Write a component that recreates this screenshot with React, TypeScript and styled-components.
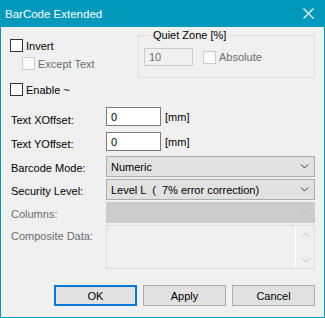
import React from 'react';
import styled, { createGlobalStyle } from 'styled-components';

const GlobalStyle = createGlobalStyle`
  html, body {
    margin: 0;
    padding: 0;
    background: #f0f0f0;
  }
  * {
    box-sizing: border-box;
  }
`;

const Window = styled.div`
  width: 325px;
  height: 318px;
  display: flex;
  flex-direction: column;
  background: #f0f0f0;
  border: 1px solid #0099bc;
  border-top: none;
  font-family: 'Liberation Sans', Arial, sans-serif;
  font-size: 11px;
  color: #000;
`;

const TitleBar = styled.div`
  height: 27px;
  margin: 0 -1px;
  padding: 0 11px 0 5px;
  display: flex;
  align-items: center;
  justify-content: space-between;
  background: #0099bc;
  color: #fff;
  font-size: 11.5px;
  flex-shrink: 0;
`;

const Body = styled.div`
  flex: 1;
  display: flex;
  flex-direction: column;
  padding: 0 9px 0 9px;
`;

const TopRow = styled.div`
  display: flex;
  align-items: flex-start;
  justify-content: space-between;
`;

const LeftCol = styled.div`
  display: flex;
  flex-direction: column;
  gap: 5px;
  padding-top: 12px;
`;

const CheckRow = styled.label<{ $indent?: number; $disabled?: boolean }>`
  display: flex;
  align-items: center;
  gap: 3px;
  height: 13px;
  margin-left: ${p => p.$indent || 0}px;
  color: ${p => (p.$disabled ? '#6d6d6d' : '#000')};
  white-space: nowrap;
`;

const Box = styled.span<{ $disabled?: boolean }>`
  width: 13px;
  height: 13px;
  flex-shrink: 0;
  background: ${p => (p.$disabled ? '#fbfbfb' : '#fff')};
  border: 1px solid ${p => (p.$disabled ? '#cccccc' : '#333333')};
`;

const Group = styled.fieldset`
  margin: 1px 0 0 0;
  width: 177px;
  height: 50px;
  padding: 0 0 0 5px;
  border: 1px solid #dcdcdc;
  display: flex;
  align-items: flex-start;
  gap: 10px;
`;

const Legend = styled.legend`
  margin-left: 7px;
  padding: 0 2px;
  line-height: 14px;
`;

const TextInput = styled.div<{ $disabled?: boolean; $w: number; $h: number }>`
  width: ${p => p.$w}px;
  height: ${p => p.$h}px;
  display: flex;
  align-items: center;
  padding-left: 4px;
  background: ${p => (p.$disabled ? '#f0f0f0' : '#fff')};
  border: 1px solid ${p => (p.$disabled ? '#cccccc' : '#7a7a7a')};
  color: ${p => (p.$disabled ? '#6d6d6d' : '#000')};
`;

const GroupInner = styled.div`
  display: flex;
  align-items: center;
  gap: 10px;
  margin-top: 6px;
`;

const Form = styled.div`
  display: grid;
  grid-template-columns: 96px 1fr;
  align-items: center;
  margin-top: 11px;
`;

const Label = styled.div<{ $disabled?: boolean }>`
  padding-left: 1px;
  color: ${p => (p.$disabled ? '#6d6d6d' : '#000')};
  align-self: center;
`;

const TopLabel = styled(Label)`
  align-self: start;
  padding-top: 5px;
`;

const OffsetCell = styled.div<{ $gap: number }>`
  display: flex;
  align-items: center;
  gap: 4px;
  margin-bottom: ${p => p.$gap}px;
`;

const Combo = styled.div<{ $disabled?: boolean; $gap: number }>`
  height: 21px;
  margin-bottom: ${p => p.$gap}px;
  display: flex;
  align-items: center;
  justify-content: space-between;
  padding: 0 5px 0 4px;
  background: ${p => (p.$disabled ? '#cccccc' : '#e1e1e1')};
  border: 1px solid ${p => (p.$disabled ? '#cccccc' : '#adadad')};
  white-space: pre;
`;

const Memo = styled.div`
  height: 44px;
  display: flex;
  justify-content: flex-end;
  background: #f0f0f0;
  border: 1px solid #dcdcdc;
`;

const ScrollBar = styled.div`
  width: 19px;
  display: flex;
  flex-direction: column;
  justify-content: space-between;
  align-items: center;
  padding: 6px 0 5px;
  border-left: 1px solid #ffffff;
`;

const Buttons = styled.div`
  display: flex;
  justify-content: flex-end;
  gap: 6px;
  margin-top: 16px;
`;

const Button = styled.div<{ $default?: boolean }>`
  width: 83px;
  height: 21px;
  display: flex;
  align-items: center;
  justify-content: center;
  background: #e1e1e1;
  border: ${p => (p.$default ? '2px solid #0078d7' : '1px solid #adadad')};
`;

const Chevron = ({ color = '#333', up = false }: { color?: string; up?: boolean }) => (
  <svg width="9" height="5" viewBox="0 0 9 5">
    <polyline
      points={up ? '1,4.5 4.5,1 8,4.5' : '1,0.5 4.5,4 8,0.5'}
      fill="none"
      stroke={color}
      strokeWidth="1"
    />
  </svg>
);

const CloseIcon = () => (
  <svg width="11" height="11" viewBox="0 0 11 11">
    <path d="M0.5 0.5 L10.5 10.5 M10.5 0.5 L0.5 10.5" stroke="#fff" strokeWidth="1.1" />
  </svg>
);

const Check = ({ label, disabled, indent }: { label: string; disabled?: boolean; indent?: number }) => (
  <CheckRow $disabled={disabled} $indent={indent}>
    <Box $disabled={disabled} />
    {label}
  </CheckRow>
);

export default function App() {
  return (
    <>
      <GlobalStyle />
      <Window>
        <TitleBar>
          <span>BarCode Extended</span>
          <CloseIcon />
        </TitleBar>
        <Body>
          <TopRow>
            <LeftCol>
              <Check label="Invert" />
              <Check label="Except Text" disabled indent={12} />
            </LeftCol>
            <Group>
              <Legend>Quiet Zone [%]</Legend>
              <GroupInner>
                <TextInput $disabled $w={49} $h={18}>10</TextInput>
                <Check label="Absolute" disabled />
              </GroupInner>
            </Group>
          </TopRow>
          <LeftCol style={{ paddingTop: 5 }}>
            <Check label="Enable ~" />
          </LeftCol>
          <Form>
            <Label>Text XOffset:</Label>
            <OffsetCell $gap={6}>
              <TextInput $w={55} $h={19}>0</TextInput>
              [mm]
            </OffsetCell>
            <Label>Text YOffset:</Label>
            <OffsetCell $gap={5}>
              <TextInput $w={55} $h={19}>0</TextInput>
              [mm]
            </OffsetCell>
            <Label>Barcode Mode:</Label>
            <Combo $gap={2}>
              Numeric
              <Chevron />
            </Combo>
            <Label>Security Level:</Label>
            <Combo $gap={2}>
              {'Level L  (  7% error correction)'}
              <Chevron />
            </Combo>
            <Label $disabled>Columns:</Label>
            <Combo $disabled $gap={2}>
              <span />
              <Chevron color="#b8b8b8" />
            </Combo>
            <TopLabel $disabled>Composite Data:</TopLabel>
            <Memo>
              <ScrollBar>
                <Chevron color="#c0c0c0" up />
                <Chevron color="#c0c0c0" />
              </ScrollBar>
            </Memo>
          </Form>
          <Buttons>
            <Button $default>OK</Button>
            <Button>Apply</Button>
            <Button>Cancel</Button>
          </Buttons>
        </Body>
      </Window>
    </>
  );
}
